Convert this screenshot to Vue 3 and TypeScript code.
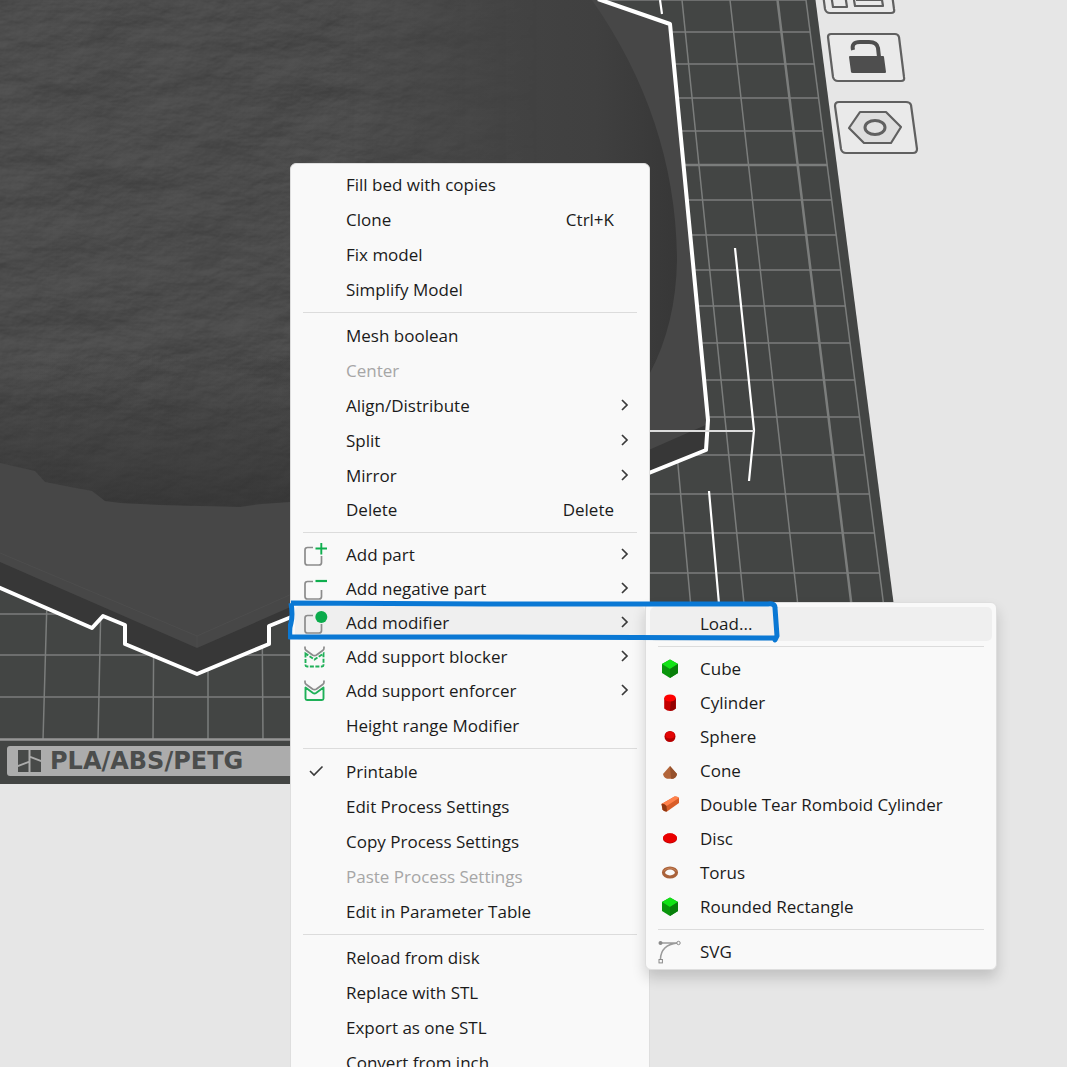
<script setup lang="ts">
import { ref } from 'vue'

interface Entry {
  label: string
  icon?: string
  shortcut?: string
  arrow?: boolean
  disabled?: boolean
  compact?: boolean
  open?: boolean
}

const groups: Entry[][] = [
  [
    { label: 'Fill bed with copies' },
    { label: 'Clone', shortcut: 'Ctrl+K' },
    { label: 'Fix model' },
    { label: 'Simplify Model' },
  ],
  [
    { label: 'Mesh boolean' },
    { label: 'Center', disabled: true },
    { label: 'Align/Distribute', arrow: true },
    { label: 'Split', arrow: true },
    { label: 'Mirror', arrow: true },
    { label: 'Delete', shortcut: 'Delete', compact: true },
  ],
  [
    { label: 'Add part', icon: 'part', arrow: true, compact: true },
    { label: 'Add negative part', icon: 'negative', arrow: true, compact: true },
    { label: 'Add modifier', icon: 'modifier', arrow: true, compact: true, open: true },
    { label: 'Add support blocker', icon: 'blocker', arrow: true, compact: true },
    { label: 'Add support enforcer', icon: 'enforcer', arrow: true, compact: true },
    { label: 'Height range Modifier' },
  ],
  [
    { label: 'Printable', icon: 'check' },
    { label: 'Edit Process Settings' },
    { label: 'Copy Process Settings' },
    { label: 'Paste Process Settings', disabled: true },
    { label: 'Edit in Parameter Table' },
  ],
  [
    { label: 'Reload from disk' },
    { label: 'Replace with STL' },
    { label: 'Export as one STL' },
    { label: 'Convert from inch' },
  ],
]

const shapeGroups: Entry[][] = [
  [{ label: 'Load...', open: true }],
  [
    { label: 'Cube', icon: 'cube' },
    { label: 'Cylinder', icon: 'cylinder' },
    { label: 'Sphere', icon: 'sphere' },
    { label: 'Cone', icon: 'cone' },
    { label: 'Double Tear Romboid Cylinder', icon: 'romboid' },
    { label: 'Disc', icon: 'disc' },
    { label: 'Torus', icon: 'torus' },
    { label: 'Rounded Rectangle', icon: 'cube' },
  ],
  [{ label: 'SVG', icon: 'curve' }],
]

const openBox = '<path d="M9 4.500H3.500Q1 4.500 1 7V19.500Q1 22 3.500 22H15Q17.500 22 17.500 19.500V13" fill="none" stroke="#8c8c8c" stroke-width="1.700"/>'
const vee = '<path d="M1 1.500V3Q1 4.500 2 5.200L8.500 10Q10.500 11.300 12.500 10L19 5.200Q20 4.500 20 3V1.500" fill="none" stroke="#8c8c8c" stroke-width="1.700"/>'

const icons: Record<string, string> = {
  part: openBox + '<path d="M11.500 5.500H23M17.300 0V11.500" stroke="#0fae4e" stroke-width="1.900"/>',
  negative: openBox + '<path d="M11.500 4H23" stroke="#0fae4e" stroke-width="2.200"/>',
  modifier: openBox + '<circle cx="17.300" cy="6" r="6" fill="#0bab4b"/>',
  blocker: vee + '<path d="M1.500 8.500V20Q1.500 21.500 3 21.500H18Q19.500 21.500 19.500 20V8.500L10.500 14.500Z" fill="none" stroke="#1fb058" stroke-width="1.900" stroke-dasharray="4 1.500"/>',
  enforcer: vee + '<path d="M1.500 8.500V19.500Q1.500 21 3 21H18Q19.500 21 19.500 19.500V8.500L12 14Q10.500 15 9 14Z" fill="none" stroke="#1fb058" stroke-width="1.900" stroke-linejoin="round"/>',
  check: '<path d="M6 11L10 15L18.500 6.500" fill="none" stroke="#3a3a3a" stroke-width="1.600"/>',
  cube: '<path d="M12 2.500L20 7V16L12 21L4 16V7Z" fill="#0a960c"/><path d="M12 2.500L20 7L12 12L4 7Z" fill="#12e316"/><path d="M12 12L20 7V16L12 21Z" fill="#087f0a"/>',
  cylinder: '<path d="M6.200 7V17.500Q12 22.500 17.800 17.500V7Z" fill="#c40000"/><path d="M13 8H17.800V17.500Q15.500 19.800 12 19.800Z" fill="#930000"/><ellipse cx="12" cy="7" rx="5.800" ry="3.500" fill="#f00"/>',
  sphere: '<circle cx="12" cy="11.500" r="5.500" fill="#b50000"/><ellipse cx="12" cy="10" rx="4.600" ry="3.500" fill="#e30505"/>',
  cone: '<path d="M12 7L19 15Q18.500 18.500 15 19.800H9Q5.500 18.500 5 15Z" fill="#b3653a"/><path d="M12 7L19 15Q18.500 18.500 15 19.800H13Z" fill="#95512c"/>',
  romboid: '<path d="M3.500 11L16.500 3.500Q20 3 21 5V10L9 18.500Q6 19 4.500 16.500Z" fill="#d95d28"/><path d="M3.500 11L16.500 3.500Q20 3 21 5L8.500 13Z" fill="#ff814b"/><path d="M3.500 11Q6 10 8.500 13L9 18.500Q6 19 4.500 16.500Z" fill="#8f3711"/>',
  disc: '<ellipse cx="12" cy="11.500" rx="7" ry="5" fill="#b80000"/><ellipse cx="12" cy="11" rx="7" ry="4.700" fill="#ea0000"/>',
  torus: '<ellipse cx="12" cy="11.500" rx="6.500" ry="4.500" fill="none" stroke="#a9623a" stroke-width="3.200"/><path d="M5.500 10Q12 4 18.500 10" fill="none" stroke="#c98257" stroke-width="1"/>',
  curve: '<path d="M3 3H20M2.500 19Q3 5 19 3" fill="none" stroke="#9a9a9a" stroke-width="1.500"/><circle cx="2.500" cy="3" r="2" fill="#8a8a8a"/><circle cx="20.500" cy="3" r="1.700" fill="#f9f9f9" stroke="#8a8a8a"/><rect x="1" y="19.500" width="3.400" height="3.400" fill="#f9f9f9" stroke="#8a8a8a"/>',
}

const bedRows = [0, 32, 64, 98, 131, 200, 235, 270, 306, 343, 380, 417, 455, 494, 533, 573, 614, 655, 697]
const rockOutline = 'M0 0H592Q676 120 677 260Q676 324 650 373Q520 500 290 502L262 504L240 507L200 506L160 505L120 503L105 501L92 491L70 487L45 482L35 471L0 463Z'
const printable = ref(true)

function activate(entry: Entry) {
  if (entry.label === 'Printable') printable.value = !printable.value
}
</script>

<template>
  <main class="viewport">
    <svg class="scene" viewBox="0 0 1067 1067" preserveAspectRatio="xMinYMin slice" aria-hidden="true">
      <defs>
        <linearGradient id="rockShade" x1="0" y1="0" x2="1" y2="0">
          <stop offset="0" stop-color="#484848" />
          <stop offset="0.6" stop-color="#464646" />
          <stop offset="0.88" stop-color="#404040" />
          <stop offset="1" stop-color="#373737" />
        </linearGradient>
        <linearGradient id="rockFoot" x1="0" y1="0" x2="0" y2="1">
          <stop offset="0.7" stop-color="#303030" stop-opacity="0" />
          <stop offset="1" stop-color="#303030" stop-opacity="0.7" />
        </linearGradient>
        <linearGradient id="grainFade" x1="0" y1="0" x2="1" y2="0">
          <stop offset="0.5" stop-color="#fff" />
          <stop offset="0.8" stop-color="#000" />
        </linearGradient>
        <mask id="grainMask"><path :d="rockOutline" fill="url(#grainFade)" /></mask>
        <filter id="grain" x="0" y="0" width="1" height="1" color-interpolation-filters="sRGB">
          <feTurbulence type="fractalNoise" baseFrequency="0.012 0.022" numOctaves="6" seed="21" result="noise" />
          <feDiffuseLighting in="noise" surfaceScale="7" lighting-color="#fff">
            <feDistantLight azimuth="240" elevation="30" />
          </feDiffuseLighting>
        </filter>
        <clipPath id="bedClip"><path d="M0 0H806L901 740H0Z" /></clipPath>
      </defs>

      <path d="M0 0H815.500L917 784H0Z" fill="#434544" />
      <g clip-path="url(#bedClip)" stroke="#7b7d7c" stroke-width="1.500" fill="none">
        <path v-for="y in bedRows" :key="y" :d="`M0 ${y}H1067`" />
        <path d="M0 165H1067" stroke-width="2.500" />
        <path d="M682 0L758 740M730 0L813 740M663 300L703 740M47 600L43 740M101 600L98 740M154 600L153 740M208 600V740M262 600L263 740" />
        <path d="M777.500 0L868 740" stroke-width="2.500" />
      </g>
      <path d="M806 0L901 740" stroke="#7b7d7c" stroke-width="1.500" />
      <path d="M0 739.500H901" stroke="#969696" stroke-width="2.500" />

      <rect x="7" y="746" width="420" height="30" rx="3" fill="#acacac" />
      <path d="M18 750H28.500V761L18 765ZM30.500 750H41V760L30.500 756ZM18 767L28.500 763V772H18ZM30.500 758L41 762V772H30.500Z" fill="#484a49" />
      <text class="bed-label" x="50" y="769">PLA/ABS/PETG</text>

      <path d="M0 0H600L671 24L708 420L706 450L269 626V644L197 674L125 644V625L103 616L92 628L0 587Z" fill="#373737" />
      <path d="M0 0H600L671 24L708 424L197 648L0 562Z" fill="#474747" />
      <path d="M0 553L197 636L310 586M197 636V647" stroke="#4d4d4d" fill="none" />
      <path :d="rockOutline" fill="url(#rockShade)" />
      <g mask="url(#grainMask)">
        <rect class="rock-grain" width="680" height="510" filter="url(#grain)" />
      </g>
      <path :d="rockOutline" fill="url(#rockFoot)" />
      <path
        d="M598 -1L670 24L708 420L706 450L269 626V644L197 674L125 644V625L103 616L92 628L-2 587"
        fill="none"
        stroke="#fff"
        stroke-width="4"
        stroke-linejoin="round"
      />
      <path d="M660 0L662 14M735 248L754 430L749 481M709 491L719 604" fill="none" stroke="#fff" stroke-width="2.200" />
      <path d="M640 431H754" stroke="#dcdcdc" stroke-width="2" />

      <g fill="#eaeaea" stroke="#606060" stroke-width="2.200" stroke-linejoin="round">
        <path d="M823 -6L825 9Q826 13 830 13H891Q895 13 894 9L892 -6Z" />
        <path d="M831 -6L833 7H847L845 -6ZM853 -6L855 6H883L881 -6ZM856 0H882" fill="none" />
        <path d="M831 34H895Q898 34 899 37L904 77Q905 81 901 81H838Q834 81 833 77L828 37Q828 34 831 34Z" />
        <path d="M839 102H906Q910 102 911 105L917 149Q917 153 913 153H846Q842 153 841 149L835 106Q835 102 839 102Z" />
        <path d="M860 112H886L901 127L891 143H864L849 128Z" fill="#dedede" />
        <ellipse cx="875" cy="127.500" rx="10" ry="7" fill="#e2e2e2" stroke-width="3" />
      </g>
      <path d="M850 56H883Q884 56 884 57L886 72Q886 73 885 73H853Q851 73 851 72L849 57Q849 56 850 56Z" fill="#4e4e4e" />
      <path d="M853 50Q851 42 860 42H869Q877 42 878 48L879 57" fill="none" stroke="#4e4e4e" stroke-width="4" />
    </svg>

    <nav class="menu" aria-label="Object menu">
      <ul v-for="(group, g) in groups" :key="g" class="group">
        <li v-for="entry in group" :key="entry.label" class="item">
          <button
            type="button"
            class="entry"
            :class="{ compact: entry.compact, active: entry.open }"
            :disabled="entry.disabled"
            @click="activate(entry)"
          >
            <span class="slot">
              <svg v-if="entry.icon && (entry.icon !== 'check' || printable)" class="icon" viewBox="0 0 24 24" v-html="icons[entry.icon]" />
            </span>
            <span class="label">{{ entry.label }}</span>
            <span v-if="entry.shortcut" class="shortcut">{{ entry.shortcut }}</span>
            <span class="tail">
              <svg v-if="entry.arrow" class="chevron" viewBox="0 0 9 14">
                <path d="M2 1L7 6L2 11" fill="none" stroke="#3a3a3a" stroke-width="1.700" />
              </svg>
            </span>
          </button>

          <template v-if="entry.open">
            <div class="menu submenu" role="group" aria-label="Modifier shapes">
              <ul v-for="(shapes, s) in shapeGroups" :key="s" class="group">
                <li v-for="shape in shapes" :key="shape.label">
                  <button type="button" class="entry compact" :class="{ active: shape.open }">
                    <span class="slot">
                      <svg v-if="shape.icon" class="icon" viewBox="0 0 24 24" v-html="icons[shape.icon]" />
                    </span>
                    <span class="label">{{ shape.label }}</span>
                  </button>
                </li>
              </ul>
            </div>
            <svg class="marker" viewBox="0 0 496 48" aria-hidden="true">
              <path
                d="M3 6L200 7L480 7Q487 6 487 11L489 39L487 43L486 41L200 40L2 40Q1 32 3 26Q5 18 3 6"
                fill="none"
                stroke="#0a78d4"
                stroke-width="5"
                stroke-linejoin="round"
              />
            </svg>
          </template>
        </li>
      </ul>
    </nav>
  </main>
</template>

<style>
body {
  background: #e6e6e6;
}
</style>

<style scoped>
.viewport {
  position: relative;
  height: 100vh;
  overflow: hidden;
  background: #e6e6e6;
  font-family: "Open Sans", "Noto Sans", sans-serif;
  font-size: 17px;
  color: #1b1b1b;
}

.scene {
  display: block;
  width: 100%;
  height: 100%;
}

.bed-label {
  font: bold 24px "DejaVu Sans", sans-serif;
  fill: #4b4d4c;
}

.rock-grain {
  opacity: 0.08;
}

.menu {
  position: absolute;
  top: 163px;
  left: 290px;
  box-sizing: border-box;
  width: 360px;
  padding: 3px 4px;
  border: 1px solid #dedede;
  border-radius: 6px;
  background: #f9f9f9;
}

.submenu {
  z-index: 1;
  top: -4px;
  left: 350px;
  width: 352px;
  padding: 4px 4px 0;
  box-shadow: 0 8px 14px rgba(0, 0, 0, 0.16);
}

.group {
  margin: 0;
  padding: 0;
  list-style: none;
}

.group + .group::before {
  content: "";
  display: block;
  height: 1px;
  margin: 4px 8px 5px;
  border-bottom: 1px solid #dcdcdc;
}

.item {
  position: relative;
}

.entry {
  display: flex;
  align-items: center;
  width: 100%;
  height: 35px;
  padding: 0 16px 0 9px;
  border: 0;
  border-radius: 5px;
  background: none;
  color: inherit;
  font: inherit;
  text-align: left;
  white-space: nowrap;
}

.submenu .entry {
  padding-left: 8px;
}

.entry.compact {
  height: 34px;
}

.compact .label,
.compact .shortcut {
  padding-bottom: 2px;
}

.entry.active {
  background: #efefef;
}

.entry:disabled {
  color: #a6a6a6;
}

.slot {
  flex: none;
  width: 24px;
  height: 24px;
  margin-right: 18px;
}

.icon {
  display: block;
  width: 24px;
  height: 24px;
}

.label {
  flex: 1;
}

.tail {
  display: flex;
  justify-content: flex-end;
  width: 15px;
}

.chevron {
  width: 9px;
  height: 14px;
}

.marker {
  position: absolute;
  z-index: 2;
  top: -9px;
  left: -7px;
  width: 496px;
  height: 48px;
  pointer-events: none;
}
</style>
